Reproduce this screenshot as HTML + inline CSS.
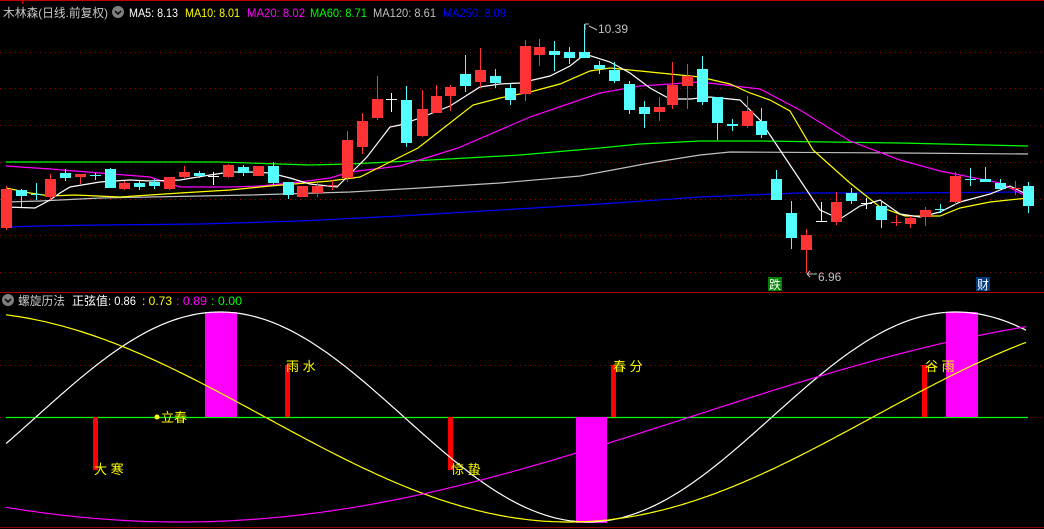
<!DOCTYPE html>
<html><head><meta charset="utf-8"><style>
html,body{margin:0;padding:0;background:#000;width:1044px;height:529px;overflow:hidden}
svg{display:block}
text{font-family:"Liberation Sans","Noto Sans CJK SC",sans-serif}
</style></head><body>
<svg id="s" width="1044" height="529" viewBox="0 0 1044 529" xmlns="http://www.w3.org/2000/svg">
<rect width="1044" height="529" fill="#000"/>
<line x1="0" y1="0.5" x2="1044" y2="0.5" stroke="#c00000"/>
<line x1="22.5" y1="0" x2="22.5" y2="4" stroke="#c00000"/>
<g stroke="#a00000" stroke-dasharray="1,4">
<line x1="0" y1="52.5" x2="1044" y2="52.5"/><line x1="0" y1="88.5" x2="1044" y2="88.5"/>
<line x1="0" y1="125.5" x2="1044" y2="125.5"/><line x1="0" y1="162.5" x2="1044" y2="162.5"/>
<line x1="0" y1="199.5" x2="1044" y2="199.5"/><line x1="0" y1="235.5" x2="1044" y2="235.5"/>
<line x1="0" y1="272.5" x2="1044" y2="272.5"/><line x1="0" y1="365.5" x2="1044" y2="365.5"/>
<line x1="0" y1="417.5" x2="1044" y2="417.5"/>
</g>
<line x1="0" y1="292.5" x2="1044" y2="292.5" stroke="#b00000"/>
<line x1="0" y1="527.5" x2="1044" y2="527.5" stroke="#8a0000"/>
<g fill="none" stroke-width="1.2">
<polyline stroke="#00ff00" points="6,162 220,162 310,165 350,164 430,160 520,155 600,148 640,144 700,141 760,141 900,143 1028,146"/>
<polyline stroke="#c0c0c0" points="6,202 40,201 100,198 150,197 250,195 350,192 420,188 500,183 580,176 650,163 700,155 730,152 900,153 1028,154"/>
<polyline stroke="#0000ff" points="6,227 40,226 100,225 200,224 300,221 400,216 500,210 600,204 700,197 800,193 900,193 1028,192"/>
<polyline stroke="#ff00ff" points="6,166 50,169 100,173 150,177 180,187 230,187 260,186 300,182 330,178 350,172 400,166 458,148 530,117 600,93 640,86 700,82 760,89 800,110 850,141 900,160 940,171 1000,183 1028,197"/>
<polyline stroke="#ffff00" points="6,188 30,193 50,196 75,195 120,197 180,193 230,190 270,186 330,181 360,177 418,148 473,105 500,98 530,92 560,84 590,71 610,68 650,72 700,77 730,84 750,93 770,100 790,111 813,150 850,183 880,207 905,216 940,216 960,208 990,202 1028,198"/>
<polyline stroke="#ffffff" points="6,207 35,208 50,200 60,193 70,187 100,182 130,180 150,181 180,180 210,175 230,172 250,172 270,173 290,178 310,184 337,187 367,157 390,127 400,125 420,118 450,106 480,87 500,84 520,83 550,76 570,66 585,54 610,62 630,73 650,88 670,99 690,99 710,97 740,100 760,120 780,150 800,180 820,210 840,219 860,206 880,200 900,214 920,217 940,212 960,202 990,194 1010,186 1028,195"/>
</g>
<g id="c"></g>
<g font-size="12" fill="#c0c0c0">
<text x="598" y="33">10.39</text>
<text x="818" y="281">6.96</text>
</g>
<path d="M585 24 L585 30 M585 24 l4 0 M589 26 l8 4" stroke="#c0c0c0" fill="none"/>
<path d="M807 274 l10 0 M807 274 l3 -3 M807 274 l3 3" stroke="#c0c0c0" fill="none"/>
<rect x="768" y="277" width="14" height="14" fill="#008000"/>
<text x="769" y="289" font-size="12" fill="#fff">跌</text>
<rect x="976" y="277" width="14" height="14" fill="#003a80"/>
<text x="977" y="289" font-size="12" fill="#fff">财</text>
<g font-size="12">
<text x="3" y="17" fill="#c8c8c8" textLength="105" lengthAdjust="spacingAndGlyphs">木林森(日线.前复权)</text>
<circle cx="118" cy="12" r="6" fill="#808080"/><path d="M115 11 l3 3 l3 -3" stroke="#000" stroke-width="1.5" fill="none"/>
<text x="129" y="17" fill="#fff" textLength="49" lengthAdjust="spacingAndGlyphs">MA5: 8.13</text>
<text x="185" y="17" fill="#ffff00" textLength="55" lengthAdjust="spacingAndGlyphs">MA10: 8.01</text>
<text x="247" y="17" fill="#ff00ff" textLength="58" lengthAdjust="spacingAndGlyphs">MA20: 8.02</text>
<text x="310" y="17" fill="#00ff00" textLength="57" lengthAdjust="spacingAndGlyphs">MA60: 8.71</text>
<text x="373" y="17" fill="#c0c0c0" textLength="63" lengthAdjust="spacingAndGlyphs">MA120: 8.61</text>
<text x="443" y="17" fill="#0000ff" textLength="63" lengthAdjust="spacingAndGlyphs">MA250: 8.09</text>
</g>
<g font-size="12">
<circle cx="8" cy="300" r="6" fill="#808080"/><path d="M5 299 l3 3 l3 -3" stroke="#000" stroke-width="1.5" fill="none"/>
<text x="18" y="305" fill="#c8c8c8" textLength="47" lengthAdjust="spacingAndGlyphs">螺旋历法</text>
<text x="72" y="305" fill="#fff" textLength="36" lengthAdjust="spacingAndGlyphs">正弦值</text>
<text x="108" y="305" fill="#fff" textLength="28" lengthAdjust="spacingAndGlyphs">: 0.86</text>
<text x="142" y="305" fill="#ffff00" textLength="30" lengthAdjust="spacingAndGlyphs">: 0.73</text>
<text x="176" y="305" fill="#ff00ff" textLength="31" lengthAdjust="spacingAndGlyphs">: 0.89</text>
<text x="211" y="305" fill="#00ff00" textLength="31" lengthAdjust="spacingAndGlyphs">: 0.00</text>
</g>
<line x1="6" y1="417.5" x2="1028" y2="417.5" stroke="#00ff00" stroke-width="1.2"/>
<g fill="#ff00ff">
<rect x="205" y="312" width="32" height="105"/>
<rect x="576" y="417" width="31" height="106"/>
<rect x="946" y="312" width="32" height="105"/>
</g>
<g fill="#ff0000">
<rect x="93" y="417" width="5" height="53"/>
<rect x="285" y="365" width="5" height="52"/>
<rect x="448" y="417" width="5" height="53"/>
<rect x="611" y="365" width="5" height="52"/>
<rect x="922" y="365" width="5" height="52"/>
</g>
<g id="w" fill="none" stroke-width="1.2"></g>
<circle cx="157" cy="417" r="2.5" fill="#ffff00"/>
<g font-size="13" fill="#ffff00">
<text x="161" y="422">立春</text>
<text x="94" y="474">大 寒</text>
<text x="286" y="371">雨 水</text>
<text x="451" y="474">惊 蛰</text>
<text x="613" y="371">春 分</text>
<text x="925" y="371">谷 雨</text>
</g>
</svg>
<script>
var d=[[6,189,228,186,230,'r'],[21,190,196,189,207,'c'],[36,194,195,183,200,'cx'],[50,179,197,174,200,'r'],[65,173,178,169,181,'c'],[80,174,177,174,184,'r'],[95,175,176,173,180,'cx'],[110,169,188,168,188,'c'],[124,183,189,181,190,'r'],[139,183,187,180,190,'c'],[154,182,186,179,189,'c'],[169,177,189,177,190,'r'],[184,172,177,166,178,'r'],[199,173,176,171,178,'c'],[213,176,177,172,185,'wx'],[228,165,177,164,178,'r'],[243,167,173,165,176,'c'],[258,166,176,166,176,'r'],[273,166,183,162,185,'c'],[288,182,195,182,199,'c'],[302,186,197,186,197,'r'],[317,186,193,183,197,'r'],[332,185,186,180,190,'rx'],[347,140,178,131,182,'r'],[362,121,147,113,154,'r'],[377,99,118,76,120,'r'],[391,99,100,93,112,'wx'],[406,100,143,86,147,'c'],[422,109,136,90,137,'r'],[436,96,113,85,113,'r'],[450,87,96,85,111,'r'],[465,74,86,55,92,'c'],[480,70,82,48,87,'r'],[495,76,83,69,88,'c'],[510,88,100,84,105,'c'],[525,46,94,40,101,'r'],[539,47,55,39,66,'r'],[554,51,55,41,71,'c'],[569,52,58,47,64,'c'],[584,52,58,24,58,'c'],[599,65,69,61,74,'c'],[614,70,81,62,83,'c'],[629,84,110,81,114,'c'],[644,107,114,101,128,'c'],[659,107,112,97,121,'r'],[672,85,105,62,109,'r'],[687,76,86,64,109,'r'],[702,69,102,56,105,'c'],[717,97,123,97,140,'c'],[732,124,126,119,131,'c'],[747,111,126,96,128,'r'],[761,121,135,108,138,'c'],[776,179,200,170,200,'c'],[791,213,238,201,249,'c'],[806,235,250,229,273,'r'],[821,221,222,202,222,'wt'],[836,202,222,192,225,'r'],[851,193,201,188,204,'c'],[866,203,204,198,209,'wx'],[881,206,220,202,228,'c'],[896,222,223,215,226,'rx'],[910,218,224,216,228,'r'],[925,210,217,207,226,'r'],[940,209,210,204,213,'cx'],[955,176,202,172,205,'r'],[970,179,180,168,186,'cx'],[985,179,182,167,182,'c'],[1000,183,189,179,189,'c'],[1015,188,189,181,195,'rx'],[1028,186,206,182,213,'c']];
var cols={r:'#ff3333',c:'#54ffff',w:'#ffffff'},h='';
d.forEach(function(a){var k=a[5],col=cols[k[0]];
h+='<line x1="'+(a[0]+.5)+'" y1="'+a[3]+'" x2="'+(a[0]+.5)+'" y2="'+a[4]+'" stroke="'+col+'"/>';
if(k.length>1){h+='<line x1="'+(a[0]-5)+'" y1="'+(a[1]+.5)+'" x2="'+(a[0]+6)+'" y2="'+(a[1]+.5)+'" stroke="'+col+'"/>';}
else h+='<rect x="'+(a[0]-5)+'" y="'+a[1]+'" width="11" height="'+Math.max(1,a[2]-a[1])+'" fill="'+col+'"/>';});
document.getElementById('c').innerHTML=h;
function pl(f,col){var p=[];for(var x=6;x<=1028;x+=3)p.push(x+','+f(x).toFixed(1));return '<polyline stroke="'+col+'" points="'+p.join(' ')+'"/>';}
var P=Math.PI;
var w=pl(function(x){return 417-105*Math.sin(2*P*(x-36)/736)},'#ffffff')+
pl(function(x){return 417+105*Math.sin(P/2*(x-265)/304)},'#ffff00')+
pl(function(x){return 417-105*Math.sin(P/2*(x-690)/510)},'#ff00ff');
document.getElementById('w').innerHTML=w;
</script>
</body></html>
